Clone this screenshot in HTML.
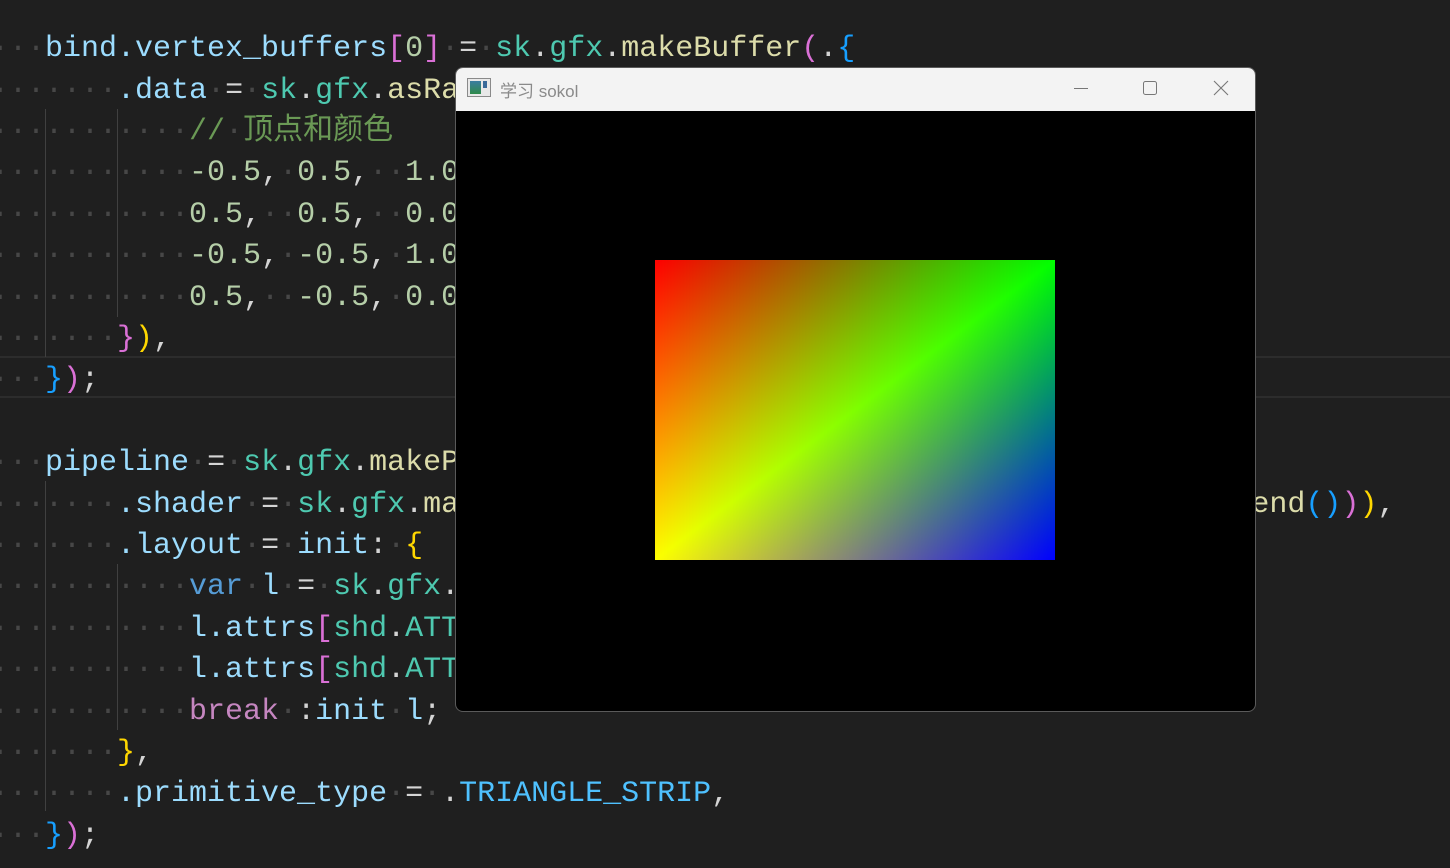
<!DOCTYPE html>
<html><head><meta charset="utf-8">
<style>
html,body{margin:0;padding:0;background:#1f1f1f;width:1450px;height:868px;overflow:hidden;}
#code{position:absolute;left:-9px;top:29.3px;font-family:"Liberation Mono","Noto Sans CJK SC",monospace;font-size:30px;line-height:41.4px;white-space:pre;color:#9cdcfe;}
.l{height:41.4px;}
.d{color:#474747;}
.t{color:#4ec9b0}.f{color:#dcdcaa}.n{color:#b5cea8}.c{color:#6a9955}.k{color:#569cd6}.b{color:#c586c0}
.g{color:#ffd700}.p{color:#da70d6}.u{color:#179fff}.w{color:#d4d4d4}.e{color:#4fc1ff}
.guide{position:absolute;width:1px;background:#404040;}
#hl{position:absolute;left:0;width:1450px;top:356px;height:38px;border-top:2px solid #2c2c2c;border-bottom:2px solid #2c2c2c;}
#win{position:absolute;left:455px;top:67px;width:799px;height:643px;border:1px solid #5a5a5a;border-radius:8px;overflow:hidden;background:#000;}
#tb{position:absolute;left:0;top:0;width:100%;height:43px;background:#f3f3f3;}
#title{position:absolute;left:44px;top:9px;font-family:"Liberation Sans","Noto Sans CJK SC",sans-serif;font-size:17px;color:#8a8a8a;}
#cv{position:absolute;left:199px;top:192px;width:400px;height:300px;background:linear-gradient(135deg,#f00,#8f0 50%,#00f);}
</style></head><body>
<div id="hl"></div>
<div class="guide" style="left:45px;top:109px;height:248px"></div>
<div class="guide" style="left:117px;top:109px;height:208px"></div>
<div class="guide" style="left:45px;top:481px;height:330px"></div>
<div class="guide" style="left:117px;top:564px;height:166px"></div>
<div id="code"><div class="l"><span class="d">···</span>bind.vertex_buffers<span class="p">[</span><span class="n">0</span><span class="p">]</span><span class="d">·</span><span class="w">=</span><span class="d">·</span><span class="t">sk</span><span class="w">.</span><span class="t">gfx</span><span class="w">.</span><span class="f">makeBuffer</span><span class="p">(</span><span class="w">.</span><span class="u">{</span></div><div class="l"><span class="d">·······</span>.data<span class="d">·</span><span class="w">=</span><span class="d">·</span><span class="t">sk</span><span class="w">.</span><span class="t">gfx</span><span class="w">.</span><span class="f">asRange</span><span class="g">(</span></div><div class="l"><span class="d">···········</span><span class="c">//<span class="d">·</span>顶点和颜色</span></div><div class="l"><span class="d">···········</span><span class="n">-0.5</span><span class="w">,</span><span class="d">·</span><span class="n">0.5</span><span class="w">,</span><span class="d">··</span><span class="n">1.0</span></div><div class="l"><span class="d">···········</span><span class="n">0.5</span><span class="w">,</span><span class="d">··</span><span class="n">0.5</span><span class="w">,</span><span class="d">··</span><span class="n">0.0</span></div><div class="l"><span class="d">···········</span><span class="n">-0.5</span><span class="w">,</span><span class="d">·</span><span class="n">-0.5</span><span class="w">,</span><span class="d">·</span><span class="n">1.0</span></div><div class="l"><span class="d">···········</span><span class="n">0.5</span><span class="w">,</span><span class="d">··</span><span class="n">-0.5</span><span class="w">,</span><span class="d">·</span><span class="n">0.0</span></div><div class="l"><span class="d">·······</span><span class="p">}</span><span class="g">)</span><span class="w">,</span></div><div class="l"><span class="d">···</span><span class="u">}</span><span class="p">)</span><span class="w">;</span></div><div class="l"></div><div class="l"><span class="d">···</span>pipeline<span class="d">·</span><span class="w">=</span><span class="d">·</span><span class="t">sk</span><span class="w">.</span><span class="t">gfx</span><span class="w">.</span><span class="f">makePipeline</span><span class="p">(</span><span class="w">.</span><span class="u">{</span></div><div class="l"><span class="d">·······</span>.shader<span class="d">·</span><span class="w">=</span><span class="d">·</span><span class="t">sk</span><span class="w">.</span><span class="t">gfx</span><span class="w">.</span><span class="f">makeShader</span><span class="g">(</span><span class="t">shd</span><span class="w">.</span><span class="f">quadShaderDesc</span><span class="p">(</span><span class="t">sk</span><span class="w">.</span><span class="t">gfx</span><span class="w">.</span><span class="f">queryBackend</span><span class="u">()</span><span class="p">)</span><span class="g">)</span><span class="w">,</span></div><div class="l"><span class="d">·······</span>.layout<span class="d">·</span><span class="w">=</span><span class="d">·</span>init<span class="w">:</span><span class="d">·</span><span class="g">{</span></div><div class="l"><span class="d">···········</span><span class="k">var</span><span class="d">·</span>l<span class="d">·</span><span class="w">=</span><span class="d">·</span><span class="t">sk</span><span class="w">.</span><span class="t">gfx</span><span class="w">.</span></div><div class="l"><span class="d">···········</span>l.attrs<span class="p">[</span><span class="t">shd</span><span class="w">.</span><span class="t">ATTR</span></div><div class="l"><span class="d">···········</span>l.attrs<span class="p">[</span><span class="t">shd</span><span class="w">.</span><span class="t">ATTR</span></div><div class="l"><span class="d">···········</span><span class="b">break</span><span class="d">·</span><span class="w">:</span>init<span class="d">·</span>l<span class="w">;</span></div><div class="l"><span class="d">·······</span><span class="g">}</span><span class="w">,</span></div><div class="l"><span class="d">·······</span>.primitive_type<span class="d">·</span><span class="w">=</span><span class="d">·</span><span class="w">.</span><span class="e">TRIANGLE_STRIP</span><span class="w">,</span></div><div class="l"><span class="d">···</span><span class="u">}</span><span class="p">)</span><span class="w">;</span></div></div>
<div id="win">
<div id="tb">
<svg style="position:absolute;left:11px;top:10px" width="24" height="20" viewBox="0 0 24 20"><rect x="0.5" y="0.5" width="23" height="18" fill="#e8e8e8" stroke="#8a8a8a"/><defs><linearGradient id="ig" x1="0" y1="0" x2="0" y2="1"><stop offset="0" stop-color="#3a7ca0"/><stop offset="1" stop-color="#2f8a4a"/></linearGradient></defs><rect x="3" y="3" width="11" height="13" fill="url(#ig)"/><rect x="16" y="3" width="4" height="7" fill="#3a6a9a"/></svg>
<div id="title">学习 sokol</div>
<svg style="position:absolute;left:610px;top:11px" width="180" height="20" viewBox="0 0 180 20"><line x1="8" y1="9.5" x2="22" y2="9.5" stroke="#777" stroke-width="1"/><rect x="77.5" y="2.5" width="13" height="13" rx="2" fill="none" stroke="#777" stroke-width="1"/><path d="M148 2 L162 16 M162 2 L148 16" stroke="#777" stroke-width="1.1"/></svg>
</div>
<canvas id="cv" width="400" height="300"></canvas>
</div>
<script>
(function(){var c=document.getElementById('cv');var x=c.getContext('2d');var W=400,H=300;var im=x.createImageData(W,H);var d=im.data;
for(var j=0;j<H;j++){for(var i=0;i<W;i++){var u=(i+0.5)/W,v=(j+0.5)/H,r,g,b;
if(u+v<=1){var a=1-u-v;r=a+v;g=u+v;b=0;}else{var tr=1-v,bl=1-u,br=u+v-1;r=bl;g=tr+bl;b=br;}
var k=(j*W+i)*4;d[k]=Math.min(255,r*255);d[k+1]=Math.min(255,g*255);d[k+2]=Math.min(255,b*255);d[k+3]=255;}}
x.putImageData(im,0,0);})();
</script>
</body></html>
